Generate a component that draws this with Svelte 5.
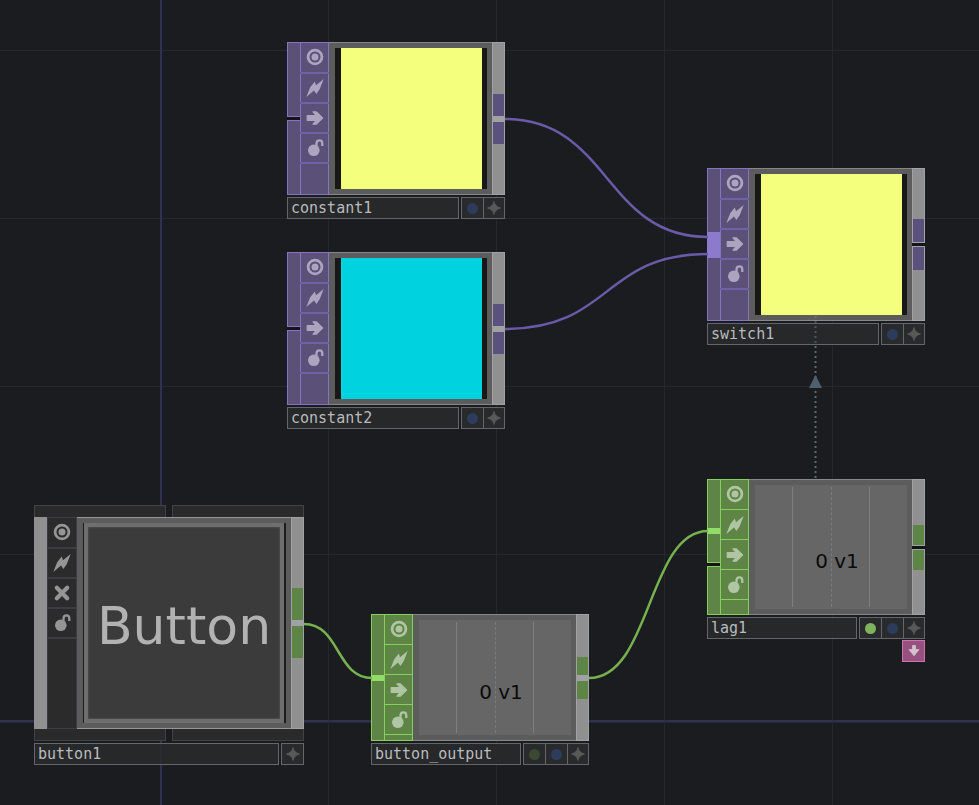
<script>
  const size = { w: 979, h: 805 };

  const nodes = [
    { name: 'constant1', x: 287, y: 42, kind: 'top', view: 'swatch', fill: '#f4ff7d', h: 153, input: 'split', output: 'joined', pin: 22, bypass: 'arrow', lamps: ['#2c3c5a'] },
    { name: 'constant2', x: 287, y: 252, kind: 'top', view: 'swatch', fill: '#00d3e0', h: 153, input: 'split', output: 'joined', pin: 22, bypass: 'arrow', lamps: ['#2c3c5a'] },
    { name: 'switch1', x: 707, y: 168, kind: 'top', view: 'swatch', fill: '#f4ff7d', h: 153, input: 'wide', output: 'split', pin: 23, bypass: 'arrow', lamps: ['#2c3c5a'] },
    { name: 'lag1', x: 707, y: 479, kind: 'chop', view: 'chart', h: 136, input: 'first', output: 'split', pin: 20, bypass: 'arrow', lamps: ['#7fb45c', '#2c3c5a'], tag: true },
    { name: 'button_output', x: 371, y: 614, kind: 'chop', view: 'chart', h: 127, input: 'single', output: 'joined', pin: 18, bypass: 'arrow', lamps: ['#3b4832', '#2c3c5a'] },
    { name: 'button1', x: 34, y: 517, kind: 'comp', view: 'button', h: 212, input: 'none', output: 'joined', pin: 32, bypass: 'cross', lamps: [] }
  ];

  const wires = [
    { d: 'M505 119C610 119 604 237 708 237', c: '#6a5aa8' },
    { d: 'M505 329C612 329 602 254 708 254', c: '#6a5aa8' },
    { d: 'M304 624C340 624 336 678 372 678', c: '#76b24f' },
    { d: 'M589 678C651 678 648 531 708 531', c: '#76b24f' }
  ];
</script>

{#snippet glyph(name)}
  <svg class="glyph" viewBox="-10 -10 20 20" aria-hidden="true">
    {#if name === 'viewer'}
      <circle r="6.9" fill="none" stroke="currentColor" stroke-width="2.8" />
      <circle r="3.5" fill="currentColor" />
    {:else if name === 'bolt'}
      <path d="M-8.7 9L-4.8-.8L-.2-6.4L1-2.8L8.7-9L4.8 1L1.4 6L-1 2.6Z" fill="currentColor" />
    {:else if name === 'arrow'}
      <path d="M-2-6.2H1.4L7.6 0L1.4 6.2H-2L1.2 2.3H-7.8V-2.3H1.2Z" fill="currentColor" stroke="currentColor" stroke-width="1.2" stroke-linejoin="round" />
    {:else if name === 'cross'}
      <path d="M-5.2-5.2L5.2 5.2M5.2-5.2L-5.2 5.2" fill="none" stroke="currentColor" stroke-width="4.2" stroke-linecap="round" />
    {:else if name === 'lock'}
      <circle cx="-1.2" cy="2.3" r="5.8" fill="currentColor" />
      <path d="M1.5-1V-4.5Q1.5-7.6 4.5-7.6Q7.3-7.6 7.3-4.5V-2" fill="none" stroke="currentColor" stroke-width="2.3" />
    {:else if name === 'star'}
      <path d="M0-6.4Q.8-1.4 6.4 0Q.8 1.4 0 6.4Q-.8 1.4-6.4 0Q-.8-1.4 0-6.4Z" fill="currentColor" stroke="currentColor" stroke-width="1" />
    {:else if name === 'down'}
      <path d="M-1.5-5.4H1.5V-1.4H5L0 4.8L-5-1.4H-1.5Z" fill="currentColor" stroke="currentColor" stroke-width=".8" stroke-linejoin="round" />
    {/if}
  </svg>
{/snippet}

<main class="network">
  {#each nodes as n (n.name)}
    <section class="node {n.kind}" style="left:{n.x}px;top:{n.y}px" aria-label={n.name}>
      {#if n.view === 'button'}
        <div class="tabs top-tabs"><i></i><i></i></div>
      {/if}
      <div class="body" style="height:{n.h}px">
        <div class="inputs {n.input}">
          {#if n.input !== 'none'}
            <span class="slot"></span>
            {#if n.input === 'split' || n.input === 'first'}<span class="slot"></span>{/if}
          {/if}
        </div>
        <div class="flags">
          <button aria-label="Viewer active">{@render glyph('viewer')}</button>
          <button aria-label="Clone immune">{@render glyph('bolt')}</button>
          <button aria-label="Bypass">{@render glyph(n.bypass)}</button>
          <button aria-label="Lock">{@render glyph('lock')}</button>
          <span></span>
        </div>
        <div class="viewer">
          {#if n.view === 'swatch'}
            <div class="screen"><div class="swatch" style="background:{n.fill}"></div></div>
          {:else if n.view === 'chart'}
            <div class="chart"><i></i><i></i><i></i><i></i><span>0 v1</span></div>
          {:else}
            <div class="panel"><button>Button</button></div>
          {/if}
        </div>
        <div class="outputs {n.output}">
          <span class="rail"><b style="height:{n.pin}px"></b></span>
          <span class="rail"><b style="height:{n.pin}px"></b></span>
        </div>
      </div>
      {#if n.view === 'button'}
        <div class="tabs bottom-tabs"><i></i><i></i></div>
      {/if}
      <footer>
        <span class="name">{n.name}</span>
        <span class="lamps">
          {#each n.lamps as lamp}
            <span class="cell"><i class="dot" style="background:{lamp}"></i></span>
          {/each}
          <button class="cell" aria-label="Activate viewer">{@render glyph('star')}</button>
        </span>
      </footer>
      {#if n.tag}
        <button class="tag" aria-label="Export">{@render glyph('down')}</button>
      {/if}
    </section>
  {/each}

  <svg class="wires" width={size.w} height={size.h} aria-hidden="true">
    {#each wires as w}
      <path d={w.d} fill="none" stroke={w.c} stroke-width="2.5" />
    {/each}
    <path d="M815.5 316V346" stroke="#7a8a98" stroke-opacity=".45" stroke-width="2" stroke-dasharray="2 3" />
    <path d="M815.5 346V480" stroke="#5a6874" stroke-width="2" stroke-dasharray="2 3" />
    <path d="M815.5 375L822 388H809Z" fill="#4f5f6e" />
  </svg>
</main>

<style>
  :global(body) {
    background: #1b1c20;
  }

  .network {
    position: relative;
    min-height: 100vh;
    overflow: hidden;
    background:
      linear-gradient(#2f3052, #2f3052) 160px 0 / 2px 100% no-repeat,
      linear-gradient(#2f3052, #2f3052) 0 720px / 100% 2px no-repeat,
      linear-gradient(90deg, #26272e 1px, transparent 1px) 160px 0 / 168px 100%,
      linear-gradient(#26272e 1px, transparent 1px) 0 50px / 100% 168px,
      #1b1c20;
  }

  .wires {
    position: absolute;
    left: 0;
    top: 0;
    pointer-events: none;
  }

  .node {
    position: absolute;
    width: 218px;
    --edge: #8573c4;
    --line: #6f61a6;
    --rule: 2px;
    --fill: #5a5078;
    --icon: #aba5c0;
    --pin: #5b517d;
  }

  .chop {
    --edge: #86d05c;
    --line: #86d05c;
    --rule: 1px;
    --fill: #5e8446;
    --icon: #afc5a3;
    --pin: #5e8547;
  }

  .comp {
    width: 270px;
    --edge: #3c3d42;
    --line: #3c3d42;
    --fill: #2b2b2b;
    --icon: #959595;
    --pin: #5e8547;
  }

  button {
    margin: 0;
    padding: 0;
    border: 0;
    background: none;
    font: inherit;
    color: inherit;
  }

  .glyph {
    display: block;
    width: 20px;
    height: 20px;
  }

  .body {
    display: flex;
  }

  .inputs {
    position: relative;
    display: flex;
    flex-direction: column;
    gap: 3px;
    width: 13px;
    background: #141417;
  }

  .slot {
    flex: 1;
    border: 1px solid var(--edge);
    border-right: 0;
    background: var(--fill);
  }

  .first .slot:first-child {
    flex: 0 0 82px;
  }

  .wide::after,
  .single::after,
  .first::after {
    content: '';
    position: absolute;
    left: 0;
    right: 0;
    top: 50%;
    height: 26px;
    margin-top: -13px;
    background: #8c7acd;
  }

  .single::after,
  .first::after {
    height: 6px;
    margin-top: -3px;
    background: #92db68;
  }

  .first::after {
    top: 52px;
  }

  .inputs.none {
    background: #909090;
  }

  .flags {
    display: flex;
    flex-direction: column;
    width: 29px;
    background: var(--fill);
    box-shadow: inset 0 0 0 1px var(--edge);
    color: var(--icon);
    overflow: hidden;
  }

  .flags button {
    display: flex;
    flex: 0 0 30px;
    align-items: center;
    justify-content: center;
    box-sizing: border-box;
  }

  .flags button + button,
  .flags span {
    border-top: var(--rule) solid var(--line);
  }

  .viewer {
    display: flex;
    flex: 1;
    box-sizing: border-box;
    padding: 5px 5px 5px 6px;
    border: 1px solid #868789;
    border-width: 1px 0;
    background: #5c5c5c;
  }

  .screen {
    flex: 1;
    display: flex;
    padding: 0 5px 0 6px;
    background: #181818;
  }

  .swatch {
    flex: 1;
  }

  .chart {
    position: relative;
    display: flex;
    flex: 1;
    padding: 2px 0;
    background: #666;
  }

  .chart i {
    flex: 1;
    box-sizing: border-box;
    border-right: 1px solid #7f7f7f;
  }

  .chart i:nth-child(2) {
    border-right: 1px dashed #7a7a7a;
  }

  .chart i:nth-child(4) {
    border: 0;
  }

  .chart span {
    position: absolute;
    inset: 28px 0 0 12px;
    display: flex;
    align-items: center;
    justify-content: center;
    font: 20px/24px 'DejaVu Sans', sans-serif;
    color: #0b0b0b;
  }

  .outputs {
    display: flex;
    flex-direction: column;
    width: 13px;
    background: #a0a1a5;
  }

  .rail {
    display: flex;
    flex: 1;
    flex-direction: column;
    justify-content: flex-end;
    box-sizing: border-box;
    border: 1px solid #a0a2a6;
    background: #909090;
  }

  .rail:last-child {
    justify-content: flex-start;
  }

  .rail b {
    background: var(--pin);
  }

  .joined {
    gap: 4px;
  }

  .split.outputs {
    gap: 3px;
    background: #141417;
  }

  footer {
    display: flex;
    gap: 2px;
    margin-top: 2px;
    height: 22px;
  }

  .name {
    flex: 1;
    box-sizing: border-box;
    padding-left: 3px;
    border: 1px solid #646668;
    background: rgba(41, 42, 43, 0.88);
    font: 15px/20px 'DejaVu Sans Mono', monospace;
    color: #b9bbbc;
  }

  .lamps {
    display: flex;
    border: 1px solid #646668;
    background: #292a2b;
  }

  .cell {
    display: flex;
    align-items: center;
    justify-content: center;
    width: 21px;
    color: #595959;
  }

  .cell + .cell {
    border-left: 1px solid #646668;
  }

  .dot {
    width: 11px;
    height: 11px;
    border-radius: 50%;
  }

  .tag {
    display: flex;
    align-items: center;
    justify-content: center;
    box-sizing: border-box;
    width: 23px;
    height: 22px;
    margin: 1px 0 0 auto;
    border: 1px solid #cf72ad;
    background: #965180;
    color: #d3c3cd;
  }

  .comp .flags {
    width: 30px;
  }

  .comp .viewer {
    border-color: #969696;
  }

  .panel {
    display: flex;
    flex: 1;
    border: 1px solid #1c1c1c;
    border-width: 0 2px 0 1px;
  }

  .panel button {
    flex: 1;
    padding-top: 6px;
    border: 4px solid #6e6e6e;
    background: #3b3b3b;
    box-shadow: inset 0 0 3px #5c5c5c;
    font: 52px/60px 'DejaVu Sans', sans-serif;
    color: #b2b2b2;
  }

  .tabs {
    display: flex;
    gap: 6px;
  }

  .tabs i {
    flex: 1;
    box-sizing: border-box;
    height: 12px;
    border: 1px solid #424346;
    background: #2a2a2b;
  }

  .top-tabs {
    margin-top: -12px;
  }

  .top-tabs i {
    border-bottom: 0;
  }

  .bottom-tabs i {
    border-top: 0;
  }
</style>
